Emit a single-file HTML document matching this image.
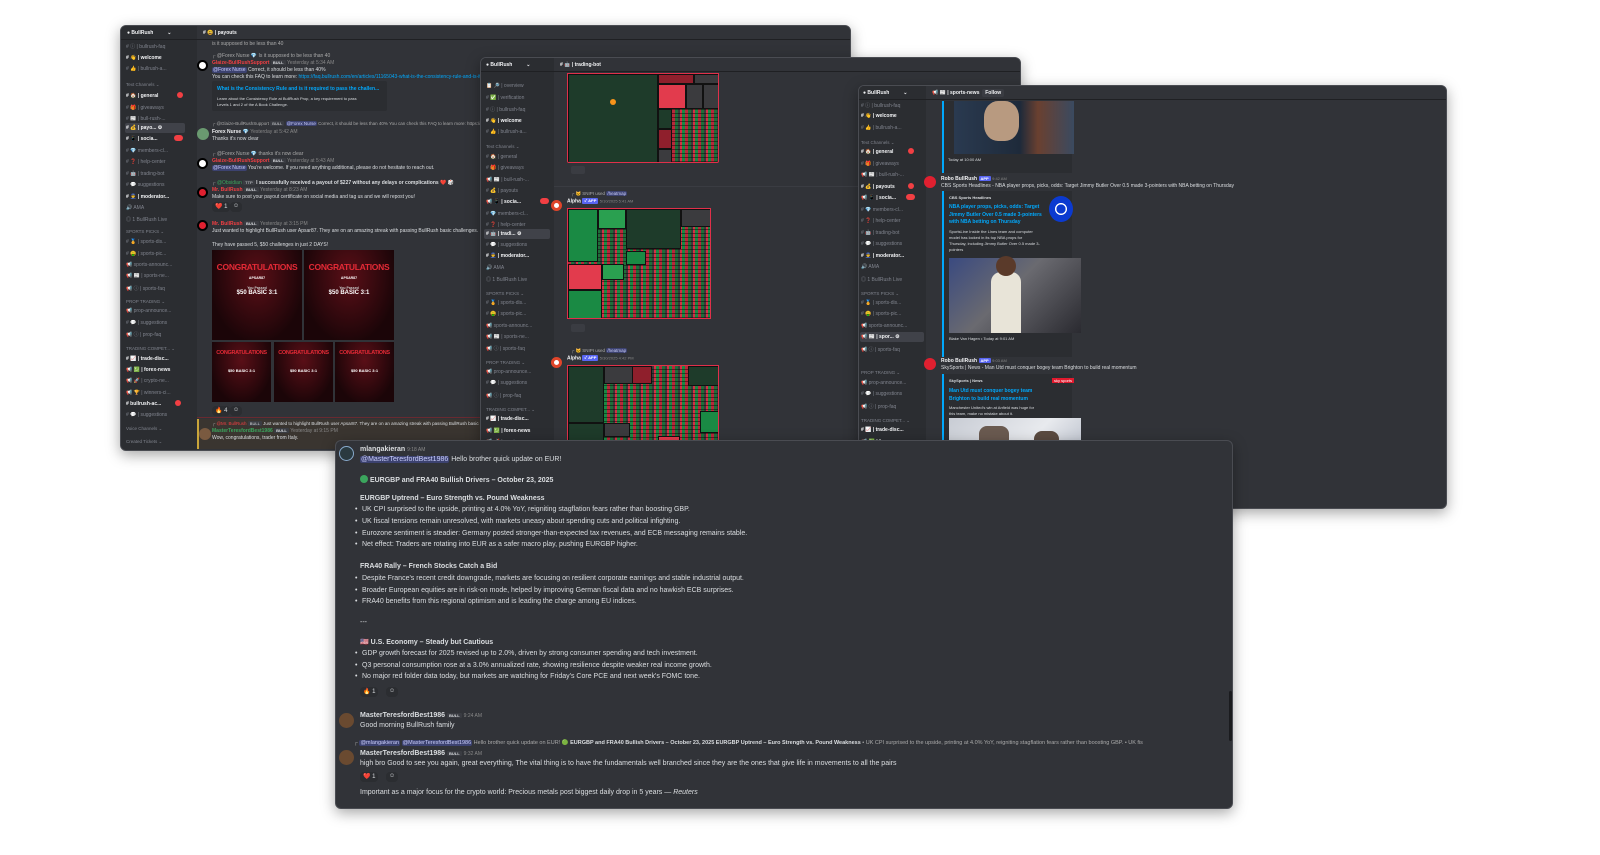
<!DOCTYPE html>
<html><head><meta charset="utf-8">
<style>
*{margin:0;padding:0;box-sizing:border-box}
body{width:1600px;height:855px;background:#fff;position:relative;overflow:hidden;font-family:"Liberation Sans","Noto Sans CJK JP",sans-serif;color:#dbdee1}
.win{position:absolute;background:#313338;border-radius:6px;overflow:hidden;box-shadow:0 4px 14px rgba(0,0,0,.35);border:1px solid #4a4c52}
.side{position:absolute;left:0;top:0;bottom:0;background:#2b2d31}
.hdr{position:absolute;left:0;right:0;top:0;height:14px;border-bottom:1px solid #1f2023;background:#313338}
.side .hdr{background:#2b2d31}
.t{position:absolute;white-space:nowrap}
.ch{position:absolute;white-space:nowrap;font-size:5px;color:#80848e}
.ch.b{color:#f2f3f5;font-weight:bold}
.cat{position:absolute;white-space:nowrap;font-size:4.5px;color:#80848e}
.sel{position:absolute;background:#404249;border-radius:2px}
.badge{position:absolute;width:6px;height:6px;border-radius:3px;background:#f23f43}
.av{position:absolute;border-radius:50%}
.red{color:#f23f43}.grn{color:#3ba55d}
.tm{position:absolute;border:1px solid #e0304a;overflow:hidden;background:
repeating-linear-gradient(0deg,rgba(0,0,0,.45) 0 1px,transparent 1px 4px),
repeating-linear-gradient(90deg,#b8283a 0 3px,#1f6e3a 3px 6px,#3a3a3a 6px 8px,#d33045 8px 10px,#1a8a44 10px 13px)}
.blk{position:absolute;border:1px solid #111}
.g1{background:#1e3b2a}.g2{background:#1a8a44}.g3{background:#2aa050}.r1{background:#e23b4d}.r2{background:#8f1f2c}.d{background:#3b3b3e}
.cong{position:absolute;background:radial-gradient(ellipse at 50% 30%,#5a0f17,#1b0508 75%);overflow:hidden;text-align:center}
.cong b{display:block;color:#e42a36;font-weight:bold;white-space:nowrap;letter-spacing:-0.3px}
.cong i{display:block;color:#fff;font-style:normal;font-weight:bold;white-space:nowrap}
.w4 .t{font-size:7px;color:#dbdee1}
.bul{position:absolute;left:26px;font-size:7px;white-space:nowrap}
.bul:before{content:"•";position:absolute;left:-7px}
.react{position:absolute;height:10px;border-radius:4px;background:#2b2d31;font-size:6px;padding:1px 3px;color:#dbdee1}
.ment{background:#3c4270;color:#c9cdfb;border-radius:2px;padding:0 1px}
.tag{display:inline-block;background:#3a3c42;color:#dbdee1;font-size:4px;padding:0 2px;border-radius:1px;vertical-align:middle}
.app{display:inline-block;background:#5865f2;color:#fff;font-size:4px;padding:0 2px;border-radius:1px;vertical-align:middle}
</style></head><body>

<!-- WINDOW 1 -->
<div class="win" style="left:120px;top:25px;width:731px;height:426px;">
 <div class="side" style="width:76px">
  <div class="hdr"><span class="t" style="left:6px;top:4px;font-size:5px;color:#f2f3f5;font-weight:bold">● BullRush&nbsp;&nbsp;&nbsp;&nbsp;&nbsp;&nbsp;&nbsp;&nbsp;&nbsp;&nbsp;⌄</span></div>
  <div class="ch" style="left:5px;top:17px"># ⓘ | bullrush-faq</div>
  <div class="ch b" style="left:5px;top:29px"># 👋 | welcome</div>
  <div class="ch" style="left:5px;top:40px"># 👍 | bullrush-a...</div>
  <div class="cat" style="left:5px;top:56px">Text Channels ⌄</div>
  <div class="ch b" style="left:5px;top:67px"># 🏠 | general</div><div class="badge" style="left:56px;top:66px"></div>
  <div class="ch" style="left:5px;top:79px"># 🎁 | giveaways</div>
  <div class="ch" style="left:5px;top:90px"># 📰 | bull-rush-...</div>
  <div class="sel" style="left:4px;top:97px;width:60px;height:10px"></div>
  <div class="ch b" style="left:5px;top:99px"># 💰 | payo... ⚙</div>
  <div class="ch b" style="left:5px;top:110px"># 📱 | socia...</div><div class="badge" style="left:53px;top:109px;width:9px"></div>
  <div class="ch" style="left:5px;top:122px"># 💎 members-cl...</div>
  <div class="ch" style="left:5px;top:133px"># ❓ | help-center</div>
  <div class="ch" style="left:5px;top:145px"># 🤖 | trading-bot</div>
  <div class="ch" style="left:5px;top:156px"># 💬 suggestions</div>
  <div class="ch b" style="left:5px;top:168px"># 👮 | moderator...</div>
  <div class="ch" style="left:5px;top:179px">🔊 AMA</div>
  <div class="ch" style="left:5px;top:190px">◎ 1 BullRush Live</div>
  <div class="cat" style="left:5px;top:203px">SPORTS PICKS ⌄</div>
  <div class="ch" style="left:5px;top:213px"># 🏅 | sports-dis...</div>
  <div class="ch" style="left:5px;top:225px"># 🤑 | sports-pic...</div>
  <div class="ch" style="left:5px;top:236px">📢 sports-announc...</div>
  <div class="ch" style="left:5px;top:247px">📢 📰 | sports-ne...</div>
  <div class="ch" style="left:5px;top:259px">📢 ⓘ | sports-faq</div>
  <div class="cat" style="left:5px;top:273px">PROP TRADING ⌄</div>
  <div class="ch" style="left:5px;top:282px">📢 prop-announce...</div>
  <div class="ch" style="left:5px;top:294px"># 💬 | suggestions</div>
  <div class="ch" style="left:5px;top:305px">📢 ⓘ | prop-faq</div>
  <div class="cat" style="left:5px;top:320px">TRADING COMPET... ⌄</div>
  <div class="ch b" style="left:5px;top:330px"># 📈 | trade-disc...</div>
  <div class="ch b" style="left:5px;top:341px">📢 💹 | forex-news</div>
  <div class="ch" style="left:5px;top:352px">📢 🚀 | crypto-ne...</div>
  <div class="ch" style="left:5px;top:364px">📢 🏆 | winners-ci...</div>
  <div class="ch b" style="left:5px;top:375px"># bullrush-ac...</div><div class="badge" style="left:54px;top:374px"></div>
  <div class="ch" style="left:5px;top:386px"># 💬 | suggestions</div>
  <div class="cat" style="left:5px;top:400px">Voice Channels ⌄</div>
  <div class="cat" style="left:5px;top:413px">Created Tickets ⌄</div>
 </div>
 <div class="hdr" style="left:76px"><span class="t" style="left:6px;top:4px;font-size:5px;color:#f2f3f5;font-weight:bold"># 😃 | payouts</span></div>
 <div style="position:absolute;left:76px;top:15px;right:0;bottom:0;font-size:5px">
  <div class="t" style="left:15px;top:0px;color:#aaa">is it supposed to be less than 40</div>
  <div class="t" style="left:15px;top:12px;color:#aaa">┌ @Forex Nurse 💎 Is it supposed to be less than 40</div>
  <div class="av" style="left:0;top:19px;width:11px;height:11px;background:#fff;border:2px solid #000"></div>
  <div class="t red" style="left:15px;top:19px;font-weight:bold">Glaize-BullRushSupport <span class="tag">BULL</span> <span style="color:#888;font-weight:normal">Yesterday at 5:34 AM</span></div>
  <div class="t" style="left:15px;top:26px"><span class="ment">@Forex Nurse</span> Correct, it should be less than 40%</div>
  <div class="t" style="left:15px;top:33px">You can check this FAQ to learn more: <span style="color:#00a8fc">https://faq.bullrush.com/en/articles/11165043-what-is-the-consistency-rule-and-is-it</span></div>
  <div style="position:absolute;left:15px;top:40px;width:175px;height:30px;background:#2b2d31;border-radius:2px"></div>
  <div class="t" style="left:20px;top:45px;color:#00a8fc;font-weight:bold">What is the Consistency Rule and is it required to pass the challen...</div>
  <div class="t" style="left:20px;top:55px;font-size:4px">Learn about the Consistency Rule at BullRush Prop, a key requirement to pass</div>
  <div class="t" style="left:20px;top:61px;font-size:4px">Levels 1 and 2 of the A Book Challenge.</div>
  <div class="t" style="left:15px;top:80px;color:#aaa;font-size:4.5px">┌ @Glaize-BullRushSupport <span class="tag">BULL</span> <span class="ment">@Forex Nurse</span> Correct, it should be less than 40% You can check this FAQ to learn more: https://</div>
  <div class="av" style="left:0;top:87px;width:12px;height:12px;background:#6a9a70"></div>
  <div class="t" style="left:15px;top:88px;font-weight:bold;color:#f2f3f5">Forex Nurse 💎 <span style="color:#888;font-weight:normal">Yesterday at 5:42 AM</span></div>
  <div class="t" style="left:15px;top:95px">Thanks it's now clear</div>
  <div class="t" style="left:15px;top:110px;color:#aaa">┌ @Forex Nurse 💎 thanks it's now clear</div>
  <div class="av" style="left:0;top:117px;width:11px;height:11px;background:#fff;border:2px solid #000"></div>
  <div class="t red" style="left:15px;top:117px;font-weight:bold">Glaize-BullRushSupport <span class="tag">BULL</span> <span style="color:#888;font-weight:normal">Yesterday at 5:43 AM</span></div>
  <div class="t" style="left:15px;top:124px"><span class="ment">@Forex Nurse</span> You're welcome. If you need anything additional, please do not hesitate to reach out.</div>
  <div class="t" style="left:15px;top:139px;color:#aaa">┌ <span class="grn">@Obsidian</span> <span class="tag">TTP</span> <b style="color:#dbdee1">I successfully received a payout of $227 without any delays or complications</b> ❤️ 🎲</div>
  <div class="av" style="left:0;top:146px;width:11px;height:11px;background:#e02030;border:2px solid #000"></div>
  <div class="t red" style="left:15px;top:146px;font-weight:bold">Mr. BullRush <span class="tag">BULL</span> <span style="color:#888;font-weight:normal">Yesterday at 8:23 AM</span></div>
  <div class="t" style="left:15px;top:153px">Make sure to post your payout certificate on social media and tag us and we will repost you!</div>
  <div class="react" style="left:15px;top:161px">❤️ 1</div><div class="react" style="left:33px;top:161px">☺</div>
  <div class="av" style="left:0;top:179px;width:11px;height:11px;background:#e02030;border:2px solid #000"></div>
  <div class="t red" style="left:15px;top:180px;font-weight:bold">Mr. BullRush <span class="tag">BULL</span> <span style="color:#888;font-weight:normal">Yesterday at 3:15 PM</span></div>
  <div class="t" style="left:15px;top:187px">Just wanted to highlight BullRush user Apsar87.  They are on an amazing streak with passing BullRush basic challenges.</div>
  <div class="t" style="left:15px;top:201px">They have passed 5, $50 challenges in just 2 DAYS!</div>
  <div class="cong" style="left:15px;top:209px;width:90px;height:90px"><b style="font-size:8.5px;margin-top:12px">CONGRATULATIONS</b><i style="font-size:3.5px;margin-top:4px">APSAR87</i><i style="font-size:3.5px;margin-top:6px;color:#ccc">You Passed</i><i style="font-size:6px">$50 BASIC 3:1</i></div>
  <div class="cong" style="left:107px;top:209px;width:90px;height:90px"><b style="font-size:8.5px;margin-top:12px">CONGRATULATIONS</b><i style="font-size:3.5px;margin-top:4px">APSAR87</i><i style="font-size:3.5px;margin-top:6px;color:#ccc">You Passed</i><i style="font-size:6px">$50 BASIC 3:1</i></div>
  <div class="cong" style="left:15px;top:301px;width:59px;height:60px"><b style="font-size:5.5px;margin-top:8px">CONGRATULATIONS</b><i style="font-size:4px;margin-top:12px">$50 BASIC 3:1</i></div>
  <div class="cong" style="left:77px;top:301px;width:59px;height:60px"><b style="font-size:5.5px;margin-top:8px">CONGRATULATIONS</b><i style="font-size:4px;margin-top:12px">$50 BASIC 3:1</i></div>
  <div class="cong" style="left:138px;top:301px;width:59px;height:60px"><b style="font-size:5.5px;margin-top:8px">CONGRATULATIONS</b><i style="font-size:4px;margin-top:12px">$50 BASIC 3:1</i></div>
  <div class="react" style="left:15px;top:365px">🔥 4</div><div class="react" style="left:33px;top:365px">☺</div>
  <div style="position:absolute;left:0;right:0;top:376px;height:1px;background:#6a2a30"></div>
  <div style="position:absolute;left:0;right:0;top:378px;height:30px;background:#3a3530;border-left:2px solid #c9a53a"></div>
  <div class="t" style="left:15px;top:380px;color:#aaa;font-size:4.5px">┌ <span class="red">@Mr. BullRush</span> <span class="tag">BULL</span> <span style="color:#dbdee1">Just wanted to highlight BullRush user Apsar87.  They are on an amazing streak with passing BullRush basic cha</span></div>
  <div class="av" style="left:2px;top:387px;width:12px;height:12px;background:#7a5a40"></div>
  <div class="t grn" style="left:15px;top:387px;font-weight:bold">MasterTeresfordBest1986 <span class="tag">BULL</span> <span style="color:#888;font-weight:normal">Yesterday at 9:15 PM</span></div>
  <div class="t" style="left:15px;top:394px">Wow, congratulations, trader from Italy.</div>
 </div>
</div>

<!-- WINDOW 2 -->
<div class="win" style="left:480px;top:57px;width:541px;height:424px;">
 <div class="side" style="width:73px">
  <div class="hdr"><span class="t" style="left:5px;top:4px;font-size:5px;color:#f2f3f5;font-weight:bold">● BullRush&nbsp;&nbsp;&nbsp;&nbsp;&nbsp;&nbsp;&nbsp;&nbsp;&nbsp;&nbsp;⌄</span></div>
  <div class="ch" style="left:5px;top:25px">📋 🔎 | overview</div>
  <div class="ch" style="left:5px;top:37px"># ✅ | verification</div>
  <div class="ch" style="left:5px;top:48px"># ⓘ | bullrush-faq</div>
  <div class="ch b" style="left:5px;top:60px"># 👋 | welcome</div>
  <div class="ch" style="left:5px;top:71px"># 👍 | bullrush-a...</div>
  <div class="cat" style="left:5px;top:86px">Text Channels ⌄</div>
  <div class="ch" style="left:5px;top:96px"># 🏠 | general</div>
  <div class="ch" style="left:5px;top:107px"># 🎁 | giveaways</div>
  <div class="ch" style="left:5px;top:119px">📢 📰 | bull-rush-...</div>
  <div class="ch" style="left:5px;top:130px"># 💰 | payouts</div>
  <div class="ch b" style="left:5px;top:141px">📢 📱 | socia...</div><div class="badge" style="left:59px;top:140px;width:9px"></div>
  <div class="ch" style="left:5px;top:153px"># 💎 members-cl...</div>
  <div class="ch" style="left:5px;top:164px"># ❓ | help-center</div>
  <div class="sel" style="left:3px;top:171px;width:66px;height:10px"></div>
  <div class="ch b" style="left:5px;top:173px"># 🤖 | tradi... ⚙</div>
  <div class="ch" style="left:5px;top:184px"># 💬 | suggestions</div>
  <div class="ch b" style="left:5px;top:195px"># 👮 | moderator...</div>
  <div class="ch" style="left:5px;top:207px">🔊 AMA</div>
  <div class="ch" style="left:5px;top:218px">◎ 1 BullRush Live</div>
  <div class="cat" style="left:5px;top:233px">SPORTS PICKS ⌄</div>
  <div class="ch" style="left:5px;top:242px"># 🏅 | sports-dis...</div>
  <div class="ch" style="left:5px;top:253px"># 🤑 | sports-pic...</div>
  <div class="ch" style="left:5px;top:265px">📢 sports-announc...</div>
  <div class="ch" style="left:5px;top:276px">📢 📰 | sports-ne...</div>
  <div class="ch" style="left:5px;top:287px">📢 ⓘ | sports-faq</div>
  <div class="cat" style="left:5px;top:302px">PROP TRADING ⌄</div>
  <div class="ch" style="left:5px;top:311px">📢 prop-announce...</div>
  <div class="ch" style="left:5px;top:322px"># 💬 | suggestions</div>
  <div class="ch" style="left:5px;top:334px">📢 ⓘ | prop-faq</div>
  <div class="cat" style="left:5px;top:349px">TRADING COMPET... ⌄</div>
  <div class="ch b" style="left:5px;top:358px"># 📈 | trade-disc...</div>
  <div class="ch b" style="left:5px;top:370px">📢 💹 | forex-news</div>
  <div class="ch" style="left:5px;top:381px">📢 🚀 | crypto-ne...</div>
  <div class="ch" style="left:5px;top:392px">📢 🏆 | winners-ci...</div>
  <div class="ch b" style="left:5px;top:404px"># bullrush-ac...</div><div class="badge" style="left:52px;top:403px"></div>
  <div class="ch" style="left:5px;top:415px"># 💬 | suggestions</div>
 </div>
 <div class="hdr" style="left:73px"><span class="t" style="left:6px;top:4px;font-size:5px;color:#f2f3f5;font-weight:bold"># 🤖 | trading-bot</span></div>
 <div class="tm" style="left:86px;top:15px;width:152px;height:90px;border-radius:0 0 2px 2px">
  <div class="blk g1" style="left:0;top:0;width:90px;height:90px"></div>
  <div class="blk r2" style="left:90px;top:0;width:36px;height:10px"></div>
  <div class="blk d" style="left:126px;top:0;width:26px;height:10px"></div>
  <div class="blk r1" style="left:90px;top:10px;width:28px;height:25px"></div>
  <div class="blk d" style="left:118px;top:10px;width:17px;height:25px"></div>
  <div class="blk d" style="left:135px;top:10px;width:17px;height:25px"></div>
  <div class="blk g1" style="left:90px;top:35px;width:14px;height:20px"></div>
  <div class="blk r2" style="left:90px;top:55px;width:14px;height:20px"></div>
  <div class="blk d" style="left:90px;top:75px;width:14px;height:15px"></div>
  <div class="av" style="left:42px;top:25px;width:6px;height:6px;background:#f7931a"></div>
 </div>
 <div class="t" style="left:90px;top:108px;width:14px;height:8px;background:#3a3c42;border-radius:2px"></div>
 <div style="position:absolute;left:73px;right:0;top:128px;height:1px;background:#3a3c42"></div>
 <div class="t" style="left:90px;top:133px;font-size:4.5px;color:#aaa">┌ 🐱 SNIPI used <span class="ment">/heatmap</span></div>
 <div class="av" style="left:70px;top:142px;width:11px;height:11px;background:#fff;border:3px solid #e0452a"></div>
 <div class="t" style="left:86px;top:140px;font-size:5px;font-weight:bold;color:#f2f3f5">Alpha <span class="app">✓ APP</span> <span style="color:#888;font-weight:normal;font-size:4px">5/10/2025 5:41 AM</span></div>
 <div class="tm" style="left:86px;top:150px;width:144px;height:111px">
  <div class="blk g2" style="left:0;top:0;width:30px;height:53px"></div>
  <div class="blk g3" style="left:30px;top:0;width:28px;height:20px"></div>
  <div class="blk g1" style="left:58px;top:0;width:55px;height:40px" ></div>
  <div class="blk d" style="left:113px;top:0;width:31px;height:18px"></div>
  <div class="blk r1" style="left:0;top:55px;width:34px;height:26px"></div>
  <div class="blk g2" style="left:0;top:81px;width:34px;height:30px"></div>
  <div class="blk g3" style="left:34px;top:55px;width:22px;height:16px"></div>
  <div class="blk g2" style="left:58px;top:42px;width:20px;height:14px"></div>
 </div>
 <div class="t" style="left:90px;top:266px;width:14px;height:8px;background:#3a3c42;border-radius:2px"></div>
 <div class="t" style="left:90px;top:290px;font-size:4.5px;color:#aaa">┌ 🐱 SNIPI used <span class="ment">/heatmap</span></div>
 <div class="av" style="left:70px;top:299px;width:11px;height:11px;background:#fff;border:3px solid #e0452a"></div>
 <div class="t" style="left:86px;top:297px;font-size:5px;font-weight:bold;color:#f2f3f5">Alpha <span class="app">✓ APP</span> <span style="color:#888;font-weight:normal;font-size:4px">5/30/2025 4:42 PM</span></div>
 <div class="tm" style="left:86px;top:307px;width:152px;height:114px">
  <div class="blk g1" style="left:0;top:0;width:36px;height:57px"></div>
  <div class="blk d" style="left:36px;top:0;width:32px;height:18px"></div>
  <div class="blk r2" style="left:64px;top:0;width:20px;height:18px"></div>
  <div class="blk g1" style="left:120px;top:0;width:32px;height:20px"></div>
  <div class="blk g2" style="left:132px;top:45px;width:20px;height:22px"></div>
  <div class="blk g1" style="left:0;top:57px;width:36px;height:27px"></div>
  <div class="blk d" style="left:0;top:84px;width:36px;height:30px"></div>
  <div class="blk d" style="left:36px;top:57px;width:26px;height:14px"></div>
  <div class="blk r1" style="left:90px;top:70px;width:22px;height:16px"></div>
 </div>
</div>

<!-- WINDOW 3 -->
<div class="win" style="left:858px;top:85px;width:589px;height:424px;">
 <div class="side" style="width:67px">
  <div class="hdr"><span class="t" style="left:4px;top:4px;font-size:5px;color:#f2f3f5;font-weight:bold">● BullRush&nbsp;&nbsp;&nbsp;&nbsp;&nbsp;&nbsp;&nbsp;&nbsp;&nbsp;&nbsp;⌄</span></div>
  <div class="ch" style="left:2px;top:16px"># ⓘ | bullrush-faq</div>
  <div class="ch b" style="left:2px;top:27px"># 👋 | welcome</div>
  <div class="ch" style="left:2px;top:39px"># 👍 | bullrush-a...</div>
  <div class="cat" style="left:2px;top:54px">Text Channels ⌄</div>
  <div class="ch b" style="left:2px;top:63px"># 🏠 | general</div><div class="badge" style="left:49px;top:62px"></div>
  <div class="ch" style="left:2px;top:75px"># 🎁 | giveaways</div>
  <div class="ch" style="left:2px;top:86px">📢 📰 | bull-rush-...</div>
  <div class="ch b" style="left:2px;top:98px"># 💰 | payouts</div><div class="badge" style="left:49px;top:97px"></div>
  <div class="ch b" style="left:2px;top:109px">📢 📱 | socia...</div><div class="badge" style="left:47px;top:108px;width:9px"></div>
  <div class="ch" style="left:2px;top:121px"># 💎 members-cl...</div>
  <div class="ch" style="left:2px;top:132px"># ❓ | help-center</div>
  <div class="ch" style="left:2px;top:144px"># 🤖 | trading-bot</div>
  <div class="ch" style="left:2px;top:155px"># 💬 | suggestions</div>
  <div class="ch b" style="left:2px;top:167px"># 👮 | moderator...</div>
  <div class="ch" style="left:2px;top:178px">🔊 AMA</div>
  <div class="ch" style="left:2px;top:190px">◎ 1 BullRush Live</div>
  <div class="cat" style="left:2px;top:205px">SPORTS PICKS ⌄</div>
  <div class="ch" style="left:2px;top:214px"># 🏅 | sports-dis...</div>
  <div class="ch" style="left:2px;top:225px"># 🤑 | sports-pic...</div>
  <div class="ch" style="left:2px;top:237px">📢 sports-announc...</div>
  <div class="sel" style="left:1px;top:246px;width:64px;height:10px"></div>
  <div class="ch b" style="left:2px;top:248px">📢 📰 | spor... ⚙</div>
  <div class="ch" style="left:2px;top:260px">📢 ⓘ | sports-faq</div>
  <div class="cat" style="left:2px;top:284px">PROP TRADING ⌄</div>
  <div class="ch" style="left:2px;top:294px">📢 prop-announce...</div>
  <div class="ch" style="left:2px;top:305px"># 💬 | suggestions</div>
  <div class="ch" style="left:2px;top:317px">📢 ⓘ | prop-faq</div>
  <div class="cat" style="left:2px;top:332px">TRADING COMPET... ⌄</div>
  <div class="ch b" style="left:2px;top:341px"># 📈 | trade-disc...</div>
  <div class="ch b" style="left:2px;top:353px">📢 💹 | forex-news</div>
  <div class="ch" style="left:2px;top:364px">📢 🚀 | crypto-ne...</div>
  <div class="ch" style="left:2px;top:376px">📢 🏆 | winners-ci...</div>
  <div class="ch b" style="left:2px;top:387px"># bullrush-ac...</div><div class="badge" style="left:49px;top:386px"></div>
  <div class="ch" style="left:2px;top:399px"># 💬 | suggestions</div>
  <div class="cat" style="left:2px;top:414px">Voice Channels ⌄</div>
 </div>
 <div class="hdr" style="left:67px"><span class="t" style="left:6px;top:4px;font-size:5px;color:#f2f3f5;font-weight:bold">📢 📰 | sports-news&nbsp;&nbsp;<span style="background:#3a3c42;padding:1px 3px;border-radius:2px">Follow</span></span></div>
 <div style="position:absolute;left:83px;top:15px;width:130px;height:72px;background:#2b2d31;border-left:2px solid #00a8fc"></div>
 <div style="position:absolute;left:95px;top:15px;width:120px;height:53px;background:linear-gradient(90deg,#2a3a50 0,#1e2a3a 55%,#6a4030 70%,#3a4a60 100%)"></div>
 <div class="av" style="left:125px;top:15px;width:35px;height:40px;background:#b89a80;border-radius:40%"></div>
 <div class="t" style="left:89px;top:71px;font-size:4px">Today at 10:00 AM</div>
 <div class="av" style="left:65px;top:90px;width:12px;height:12px;background:#e02030"></div>
 <div class="t" style="left:82px;top:90px;font-size:5px;font-weight:bold;color:#f2f3f5">Robo BullRush <span class="app">APP</span> <span style="color:#888;font-weight:normal;font-size:4px">9:42 AM</span></div>
 <div class="t" style="left:82px;top:97px;font-size:5px">CBS Sports Headlines - NBA player props, picks, odds: Target Jimmy Butler Over 0.5 made 3-pointers with NBA betting on Thursday</div>
 <div style="position:absolute;left:83px;top:105px;width:130px;height:166px;background:#2b2d31;border-left:2px solid #00a8fc"></div>
 <div class="t" style="left:90px;top:109px;font-size:4px;font-weight:bold">CBS Sports Headlines</div>
 <div class="t" style="left:90px;top:118px;font-size:5px;color:#00a8fc;font-weight:bold;line-height:7.5px">NBA player props, picks, odds: Target<br>Jimmy Butler Over 0.5 made 3-pointers<br>with NBA betting on Thursday</div>
 <div class="av" style="left:190px;top:110px;width:24px;height:26px;background:radial-gradient(circle,#0b3ad0 25%,#fff 27%,#fff 33%,#0b3ad0 35%)"></div>
 <div class="t" style="left:90px;top:143px;font-size:4px;line-height:6px">SportsLine Inside the Lines team and computer<br>model has locked in its top NBA props for<br>Thursday, including Jimmy Butler Over 0.5 made 3-<br>pointers</div>
 <div style="position:absolute;left:90px;top:172px;width:132px;height:75px;background:linear-gradient(135deg,#3a4a80,#6a6a70 45%,#2a2a30)"></div>
 <div style="position:absolute;left:132px;top:186px;width:30px;height:61px;background:#e8e4d8;border-radius:10px 10px 0 0"></div>
 <div style="position:absolute;left:137px;top:170px;width:20px;height:20px;background:#5a3a2a;border-radius:50%"></div>
 <div class="t" style="left:90px;top:250px;font-size:4px">Blake Van Hagen • Today at 9:01 AM</div>
 <div class="av" style="left:65px;top:272px;width:12px;height:12px;background:#e02030"></div>
 <div class="t" style="left:82px;top:272px;font-size:5px;font-weight:bold;color:#f2f3f5">Robo BullRush <span class="app">APP</span> <span style="color:#888;font-weight:normal;font-size:4px">9:03 AM</span></div>
 <div class="t" style="left:82px;top:279px;font-size:5px">SkySports | News - Man Utd must conquer bogey team Brighton to build real momentum</div>
 <div style="position:absolute;left:83px;top:288px;width:130px;height:136px;background:#2b2d31;border-left:2px solid #00a8fc"></div>
 <div class="t" style="left:90px;top:292px;font-size:4px;font-weight:bold">SkySports | News</div>
 <div class="t" style="left:193px;top:292px;font-size:4px;background:#e01a2e;color:#fff;padding:0 2px">sky sports</div>
 <div class="t" style="left:90px;top:302px;font-size:5px;color:#00a8fc;font-weight:bold;line-height:7.5px">Man Utd must conquer bogey team<br>Brighton to build real momentum</div>
 <div class="t" style="left:90px;top:319px;font-size:4px;line-height:6px">Manchester United's win at Anfield was huge for<br>this team, make no mistake about it.</div>
 <div style="position:absolute;left:90px;top:332px;width:132px;height:74px;background:linear-gradient(135deg,#c8ccd4,#e8eaee 50%,#a0a8b8)"></div>
 <div style="position:absolute;left:120px;top:340px;width:30px;height:55px;background:#6a5a50;border-radius:8px"></div>
 <div style="position:absolute;left:175px;top:345px;width:25px;height:50px;background:#5a4a40;border-radius:8px"></div>
 <div class="t" style="left:90px;top:395px;width:132px;height:11px;background:#ddd;font-size:6px;color:#c02030;text-align:center;font-weight:bold">REPORTER <span style="background:#111;color:#fff">NOTEBOOK</span></div>
 <div class="t" style="left:90px;top:409px;font-size:4px">Today at 10:00 AM</div>
</div>

<!-- WINDOW 4 -->
<div class="win w4" style="left:335px;top:440px;width:898px;height:369px;">
 <div class="av" style="left:3px;top:5px;width:15px;height:15px;background:#2a3a40;border:1px solid #8ac"></div>
 <div class="t grn" style="left:24px;top:5px;font-weight:bold">mlangakieran <span style="color:#888;font-weight:normal;font-size:5px">9:18 AM</span></div>
 <div class="t" style="left:24px;top:15px"><span class="ment">@MasterTeresfordBest1986</span> Hello brother quick update on EUR!</div>
 <div class="t" style="left:24px;top:34px;font-weight:bold"><span style="display:inline-block;width:8px;height:8px;border-radius:4px;background:#3ba55d;vertical-align:-1px"></span> EURGBP and FRA40 Bullish Drivers – October 23, 2025</div>
 <div class="t" style="left:24px;top:54px;font-weight:bold">EURGBP Uptrend – Euro Strength vs. Pound Weakness</div>
 <div class="bul" style="top:65px">UK CPI surprised to the upside, printing at 4.0% YoY, reigniting stagflation fears rather than boosting GBP.</div>
 <div class="bul" style="top:77px">UK fiscal tensions remain unresolved, with markets uneasy about spending cuts and political infighting.</div>
 <div class="bul" style="top:89px">Eurozone sentiment is steadier: Germany posted stronger-than-expected tax revenues, and ECB messaging remains stable.</div>
 <div class="bul" style="top:100px">Net effect: Traders are rotating into EUR as a safer macro play, pushing EURGBP higher.</div>
 <div class="t" style="left:24px;top:122px;font-weight:bold">FRA40 Rally – French Stocks Catch a Bid</div>
 <div class="bul" style="top:134px">Despite France's recent credit downgrade, markets are focusing on resilient corporate earnings and stable industrial output.</div>
 <div class="bul" style="top:146px">Broader European equities are in risk-on mode, helped by improving German fiscal data and no hawkish ECB surprises.</div>
 <div class="bul" style="top:157px">FRA40 benefits from this regional optimism and is leading the charge among EU indices.</div>
 <div class="t" style="left:24px;top:178px">---</div>
 <div class="t" style="left:24px;top:197px;font-weight:bold">🇺🇸 U.S. Economy – Steady but Cautious</div>
 <div class="bul" style="top:209px">GDP growth forecast for 2025 revised up to 2.0%, driven by strong consumer spending and tech investment.</div>
 <div class="bul" style="top:221px">Q3 personal consumption rose at a 3.0% annualized rate, showing resilience despite weaker real income growth.</div>
 <div class="bul" style="top:232px">No major red folder data today, but markets are watching for Friday's Core PCE and next week's FOMC tone.</div>
 <div class="react" style="left:24px;top:246px">🔥 1</div><div class="react" style="left:50px;top:246px">☺</div>
 <div class="av" style="left:3px;top:272px;width:15px;height:15px;background:#6a4a30"></div>
 <div class="t grn" style="left:24px;top:271px;font-weight:bold">MasterTeresfordBest1986 <span class="tag">BULL</span> <span style="color:#888;font-weight:normal;font-size:5px">9:24 AM</span></div>
 <div class="t" style="left:24px;top:281px">Good morning BullRush family</div>
 <div class="t" style="left:18px;top:299px;font-size:5.5px;color:#aaa">┌ <span class="ment">@mlangakieran</span> <span class="ment">@MasterTeresfordBest1986</span> Hello brother quick update on EUR! <b style="color:#dbdee1">🟢 EURGBP and FRA40 Bullish Drivers – October 23, 2025  EURGBP Uptrend – Euro Strength vs. Pound Weakness</b> • UK CPI surprised to the upside, printing at 4.0% YoY, reigniting stagflation fears rather than boosting GBP.  • UK fis</div>
 <div class="av" style="left:3px;top:309px;width:15px;height:15px;background:#6a4a30"></div>
 <div class="t grn" style="left:24px;top:309px;font-weight:bold">MasterTeresfordBest1986 <span class="tag">BULL</span> <span style="color:#888;font-weight:normal;font-size:5px">9:32 AM</span></div>
 <div class="t" style="left:24px;top:319px">high bro Good to see you again, great everything, The vital thing is to have the fundamentals well branched since they are the ones that give life in movements to all the pairs</div>
 <div class="react" style="left:24px;top:331px">❤️ 1</div><div class="react" style="left:50px;top:331px">☺</div>
 <div class="t" style="left:24px;top:348px">Important as a major focus for the crypto world: Precious metals post biggest daily drop in 5 years — <i>Reuters</i></div>
 <div style="position:absolute;left:893px;top:250px;width:3px;height:50px;background:#1a1b1e;border-radius:2px"></div>
</div>
</body></html>
